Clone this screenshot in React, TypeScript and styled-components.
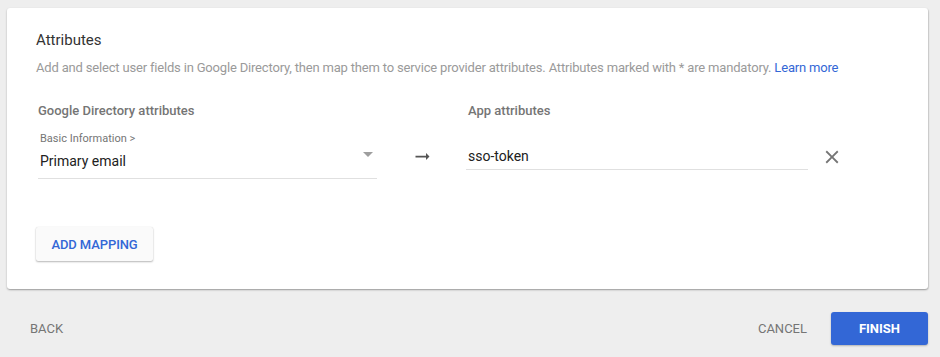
import React from 'react';
import styled, { createGlobalStyle } from 'styled-components';

const GlobalStyle = createGlobalStyle`
  html, body {
    margin: 0;
    padding: 0;
    background: #eeeeee;
    font-family: Roboto, "Liberation Sans", Arial, sans-serif;
  }
`;

const Page = styled.div`
  width: 940px;
  height: 357px;
  background: #eeeeee;
  box-sizing: border-box;
  padding: 8px 12px 0 7px;
`;

const Card = styled.section`
  background: #ffffff;
  border-radius: 3px;
  box-shadow: 0 1px 2px rgba(0, 0, 0, 0.3), 1px 1px 1px rgba(0, 0, 0, 0.08);
  padding: 22px 29px 28px 29px;
  height: 281px;
  box-sizing: border-box;
`;

const Title = styled.h2`
  margin: 0;
  font-size: 15px;
  line-height: 20px;
  font-weight: 400;
  color: #333333;
`;

const Description = styled.p`
  margin: 9px 0 0;
  font-size: 13px;
  line-height: 18px;
  letter-spacing: -0.18px;
  color: #9a9a9a;
`;

const Link = styled.a`
  color: #3367d6;
  text-decoration: none;
`;

const MappingGrid = styled.div<{ $top: number }>`
  display: grid;
  grid-template-columns: 339px 89px 342px 40px;
  align-items: start;
  margin-top: ${(p) => p.$top}px;
  padding-left: 2px;
`;

const ColumnHeader = styled.div<{ $indent?: number }>`
  padding-left: ${(p) => p.$indent ?? 0}px;
  font-size: 13px;
  line-height: 18px;
  font-weight: 500;
  color: #757575;
`;

const SelectField = styled.div`
  border-bottom: 1px solid #e0e0e0;
  padding: 0 4px 7px 2px;
`;

const SelectLabel = styled.div`
  font-size: 11px;
  line-height: 14px;
  color: #757575;
`;

const SelectValueRow = styled.div`
  display: flex;
  justify-content: space-between;
  align-items: flex-start;
  margin-top: 5px;
`;

const Value = styled.span`
  font-size: 14px;
  line-height: 20px;
  color: #212121;
`;

const Caret = styled.span`
  width: 0;
  height: 0;
  margin-top: 1px;
  border-left: 5px solid transparent;
  border-right: 5px solid transparent;
  border-top: 5px solid #9e9e9e;
`;

const ArrowCell = styled.div`
  display: flex;
  justify-content: center;
  padding: 14px 0 0 2px;
  color: #555555;
`;

const InputField = styled.div`
  margin-top: 14px;
  padding: 0 0 3px 2px;
  border-bottom: 1px solid #e0e0e0;
`;

const RemoveButton = styled.button`
  border: 0;
  background: none;
  padding: 0;
  margin: 14px 0 0 13px;
  display: flex;
  color: #757575;
  cursor: pointer;
`;

const RaisedButton = styled.button`
  margin-top: 48px;
  width: 117px;
  height: 34px;
  border: 0;
  border-radius: 2px;
  background: #fafafa;
  box-shadow: 0 1px 2px rgba(0, 0, 0, 0.28), 0 0 1px rgba(0, 0, 0, 0.12);
  color: #3367d6;
  font-family: inherit;
  font-size: 13px;
  font-weight: 500;
  letter-spacing: -0.1px;
  cursor: pointer;
`;

const Footer = styled.footer`
  display: flex;
  align-items: center;
  padding: 23px 0 0 23px;
`;

const FlatButton = styled.button`
  border: 0;
  background: none;
  padding: 0;
  font-family: inherit;
  font-size: 13px;
  font-weight: 400;
  color: #757575;
  cursor: pointer;
`;

const Spacer = styled.div`
  flex: 1;
`;

const PrimaryButton = styled.button`
  margin-left: 24px;
  width: 97px;
  height: 33px;
  border: 0;
  border-radius: 3px;
  background: #3367d6;
  box-shadow: 0 1px 2px rgba(0, 0, 0, 0.25);
  color: #ffffff;
  font-family: inherit;
  font-size: 13px;
  font-weight: 700;
  cursor: pointer;
`;

function ArrowIcon() {
  return (
    <svg width="21" height="21" viewBox="0 0 24 24" fill="currentColor">
      <path d="M16.01 11H4v2h12.01v3L20 12l-3.99-4z" />
    </svg>
  );
}

function CloseIcon() {
  return (
    <svg width="22" height="22" viewBox="0 0 24 24" fill="currentColor">
      <path d="M19 6.41L17.59 5 12 10.59 6.41 5 5 6.41 10.59 12 5 17.59 6.41 19 12 13.41 17.59 19 19 17.59 13.41 12z" />
    </svg>
  );
}

export default function App() {
  return (
    <>
      <GlobalStyle />
      <Page>
        <Card>
          <Title>Attributes</Title>
          <Description>
            Add and select user fields in Google Directory, then map them to service provider attributes.
            Attributes marked with * are mandatory. <Link href="#">Learn more</Link>
          </Description>

          <MappingGrid $top={25}>
            <ColumnHeader>Google Directory attributes</ColumnHeader>
            <div />
            <ColumnHeader $indent={2}>App attributes</ColumnHeader>
          </MappingGrid>

          <MappingGrid $top={12}>
            <SelectField>
              <SelectLabel>Basic Information &gt;</SelectLabel>
              <SelectValueRow>
                <Value>Primary email</Value>
                <Caret />
              </SelectValueRow>
            </SelectField>
            <ArrowCell>
              <ArrowIcon />
            </ArrowCell>
            <InputField>
              <Value>sso-token</Value>
            </InputField>
            <RemoveButton aria-label="Remove mapping">
              <CloseIcon />
            </RemoveButton>
          </MappingGrid>

          <RaisedButton>ADD MAPPING</RaisedButton>
        </Card>

        <Footer>
          <FlatButton>BACK</FlatButton>
          <Spacer />
          <FlatButton>CANCEL</FlatButton>
          <PrimaryButton>FINISH</PrimaryButton>
        </Footer>
      </Page>
    </>
  );
}
